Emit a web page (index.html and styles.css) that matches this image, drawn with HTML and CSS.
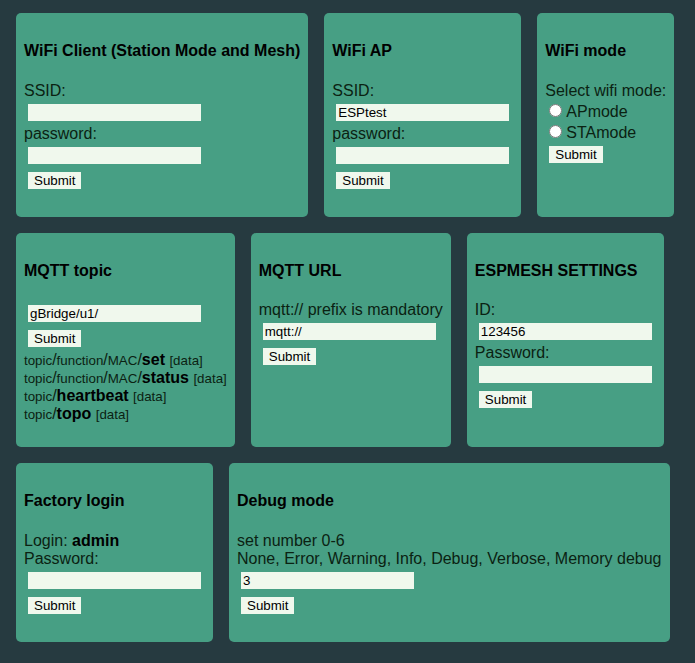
FILE: index.html
```html
<!DOCTYPE html>
<html>
<head>
<meta charset="utf-8">
<title>Settings</title>
<link rel="stylesheet" href="styles.css">
</head>
<body>
<div class="grid">
  <div class="card">
    <h4>WiFi Client (Station Mode and Mesh)</h4>
    <form>SSID:<br><input class="field" type="text"><br>password:<br><input class="field" type="password"><br><button class="btn" type="button">Submit</button></form>
  </div>
  <div class="card">
    <h4>WiFi AP</h4>
    <form>SSID:<br><input class="field" type="text" value="ESPtest"><br>password:<br><input class="field" type="password"><br><button class="btn" type="button">Submit</button></form>
  </div>
  <div class="card">
    <h4>WiFi mode</h4>
    <form>Select wifi mode:<br><input class="radio" type="radio" name="mode">APmode<br><input class="radio" type="radio" name="mode">STAmode<br><button class="btn" type="button">Submit</button></form>
  </div>
  <div class="card">
    <h4>MQTT topic</h4>
    <form><input class="field" type="text" value="gBridge/u1/"><br><button class="btn" type="button">Submit</button><br><small>topic</small>/<small>function</small>/<small>MAC</small>/<b>set</b> <small>[data]</small><br><small>topic</small>/<small>function</small>/<small>MAC</small>/<b>status</b> <small>[data]</small><br><small>topic</small>/<b>heartbeat</b> <small>[data]</small><br><small>topic</small>/<b>topo</b> <small>[data]</small></form>
  </div>
  <div class="card">
    <h4>MQTT URL</h4>
    <form>mqtt:// prefix is mandatory<br><input class="field" type="text" value="mqtt://"><br><button class="btn" type="button">Submit</button></form>
  </div>
  <div class="card">
    <h4>ESPMESH SETTINGS</h4>
    <form>ID:<br><input class="field" type="text" value="123456"><br>Password:<br><input class="field" type="password"><br><button class="btn" type="button">Submit</button></form>
  </div>
  <div class="card">
    <h4>Factory login</h4>
    <form>Login: <b>admin</b><br>Password:<br><input class="field" type="password"><br><button class="btn" type="button">Submit</button></form>
  </div>
  <div class="card">
    <h4>Debug mode</h4>
    <form>set number 0-6<br>None, Error, Warning, Info, Debug, Verbose, Memory debug<br><input class="field" type="text" value="3"><br><button class="btn" type="button">Submit</button></form>
  </div>
</div>
</body>
</html>
```
FILE: styles.css
```css
html, body {
  margin: 0;
  padding: 0;
  background: #263a40;
}
body {
  font-family: "Liberation Sans", Arial, sans-serif;
  font-size: 16px;
  color: #0b2212;
}
.grid {
  display: flex;
  flex-wrap: wrap;
  align-items: stretch;
  gap: 16px 16px;
  padding: 13px 16px;
}
.card {
  flex: none;
  background: #479f84;
  border-radius: 5px;
  padding: 8px 8px 24px 8px;
}
.card h4 {
  font-size: 16px;
  font-weight: bold;
  color: #000;
  margin: 21.28px 0;
  white-space: nowrap;
}
.card form {
  margin: 0;
  white-space: nowrap;
}
.card small {
  font-size: 13.33px;
}
.card b {
  color: #000;
}
.field {
  box-sizing: border-box;
  width: 173px;
  height: 17px;
  margin: 4px;
  padding: 1px 2px;
  border: none;
  outline: none;
  background: #f0f8ed;
  color: #000;
  font-family: "Liberation Sans", Arial, sans-serif;
  font-size: 13.33px;
}
.btn {
  box-sizing: border-box;
  height: 17px;
  margin: 4px;
  padding: 1px 6px;
  border: none;
  background: #f0f8ed;
  color: #000;
  font-family: "Liberation Sans", Arial, sans-serif;
  font-size: 13.33px;
  line-height: 15px;
}
.radio {
  width: 13px;
  height: 13px;
  margin: 4px 4px 0 4px;
}
```
